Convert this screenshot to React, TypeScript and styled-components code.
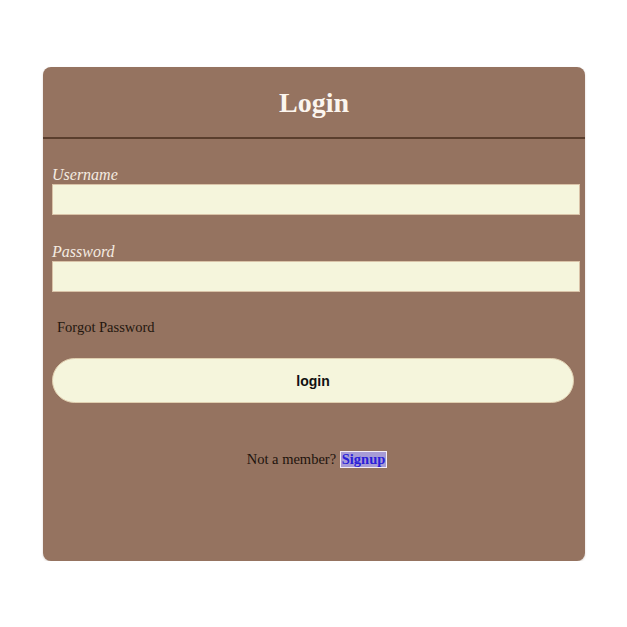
import React from "react";
import styled, { createGlobalStyle } from "styled-components";

const Global = createGlobalStyle`
  html, body { margin: 0; padding: 0; background: #ffffff; }
  body { font-family: "Liberation Serif", "Times New Roman", serif; }
`;

const Page = styled.div`
  padding: 67px 42px 0 43px;
`;

const Card = styled.div`
  background: #957360;
  border-radius: 8px;
  padding-bottom: 93px;
  box-shadow: 0 1px 2px rgba(90, 60, 40, 0.25);
`;

const Header = styled.div`
  height: 70px;
  display: flex;
  align-items: center;
  justify-content: center;
  border-bottom: 2px solid #5a3e2d;
`;

const Title = styled.h1`
  margin: 0;
  font-family: "Liberation Serif", "Times New Roman", serif;
  font-weight: bold;
  font-size: 28px;
  color: #fbf5ee;
  line-height: 1;
  padding-top: 2px;
`;

const Form = styled.form`
  display: flex;
  flex-direction: column;
  padding: 27px 5px 0 9px;
`;

const Label = styled.label<{ $gap?: number }>`
  display: block;
  font-family: "Liberation Serif", "Times New Roman", serif;
  font-style: italic;
  font-size: 16px;
  line-height: 18px;
  color: #f4ebe0;
  margin-top: ${(p) => p.$gap ?? 0}px;
`;

const Input = styled.input`
  box-sizing: border-box;
  width: 528px;
  height: 31px;
  margin: 0;
  border: 1px solid #d9c3a8;
  background: #f5f5dc;
  outline: none;
  padding: 0 6px;
`;

const Forgot = styled.div`
  margin: 27px 0 0 5px;
  font-size: 14.5px;
  line-height: 16px;
  color: #24170f;
`;

const Button = styled.button`
  box-sizing: border-box;
  width: 522px;
  height: 45px;
  margin-top: 23px;
  border: 1px solid #e0cfb0;
  border-radius: 23px;
  background: #f5f5dc;
  font-family: "Liberation Sans", Arial, sans-serif;
  font-weight: bold;
  font-size: 14px;
  color: #111;
  cursor: pointer;
`;

const Footer = styled.div`
  margin-top: 47px;
  text-align: center;
  font-size: 14.5px;
  line-height: 18px;
  color: #1e140d;
  padding-left: 2px;
`;

const SignupLink = styled.a`
  display: inline-block;
  padding: 0 1px;
  line-height: 15px;
  font-weight: bold;
  color: #2a1fd8;
  text-decoration: none;
  background: #a79bd6;
  border: 1px solid #f3ecf6;
`;

export default function App() {
  return (
    <>
      <Global />
      <Page>
        <Card>
          <Header>
            <Title>Login</Title>
          </Header>
          <Form onSubmit={(e) => e.preventDefault()}>
            <Label htmlFor="username">Username</Label>
            <Input id="username" type="text" />
            <Label htmlFor="password" $gap={28}>
              Password
            </Label>
            <Input id="password" type="password" />
            <Forgot>Forgot Password</Forgot>
            <Button type="submit">login</Button>
            <Footer>
              Not a member? <SignupLink href="#">Signup</SignupLink>
            </Footer>
          </Form>
        </Card>
      </Page>
    </>
  );
}
